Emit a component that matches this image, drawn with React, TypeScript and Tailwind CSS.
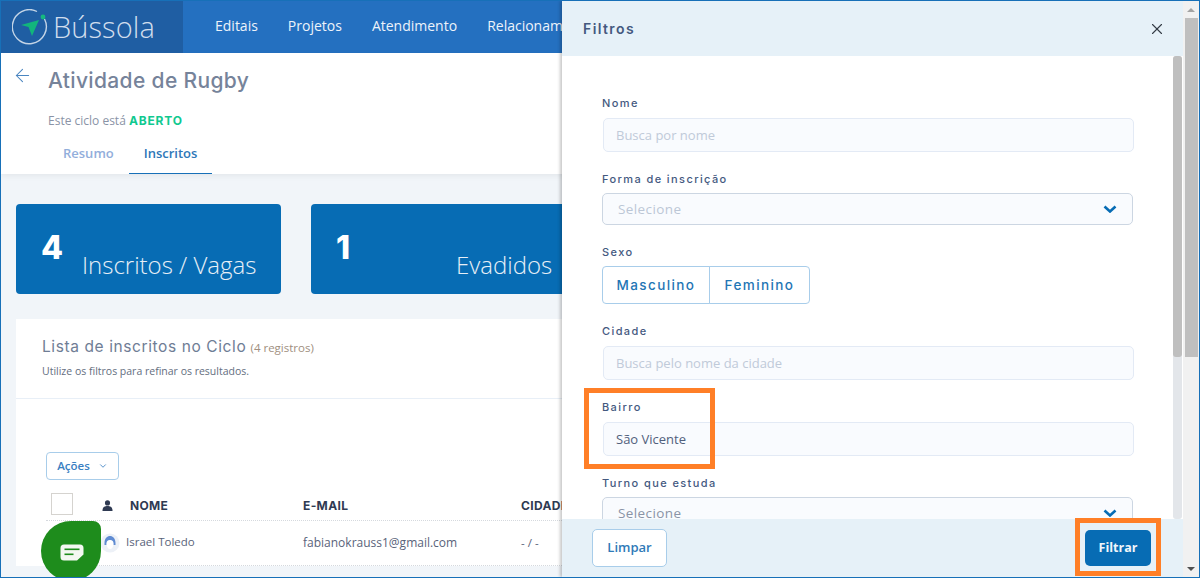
import { ArrowLeft, ChevronDown, X } from "lucide-react";

const navItems = ["Editais", "Projetos", "Atendimento", "Relacionamento"];

const labelClass = "font-['Inter',sans-serif] text-[11px] leading-[14px] font-medium tracking-[1.4px] text-[#44597f]";

function BussolaLogo() {
  return (
    <svg width="36" height="36" viewBox="0 0 36 36" fill="none">
      <path d="M32.5 10 A17 17 0 1 1 25 2.5" stroke="#c3d4e6" strokeWidth="1.4" />
      <circle cx="31" cy="8" r="2.4" fill="#16b97f" />
      <path d="M9 16 L27 11 L20 27 L16.5 18 Z" fill="#12b57c" />
    </svg>
  );
}

function Field({ label, value, placeholder }: { label: string; value?: string; placeholder?: string }) {
  return (
    <div>
      <div className={labelClass}>{label}</div>
      <div className="ml-px mt-[8px] h-[34px] w-[531px] rounded-[5px] border border-[#e3eaf5] bg-[#f9fbfe] pl-[12px] text-[13px] leading-[32px]">
        {value ? <span className="text-[#51607c]">{value}</span> : <span className="text-[#c0cad9]">{placeholder}</span>}
      </div>
    </div>
  );
}

function SelectField({ label, muted }: { label: string; muted?: boolean }) {
  return (
    <div>
      <div className={labelClass}>{label}</div>
      <div className="mt-[7px] flex h-[32px] w-[531px] items-center justify-between rounded-[5px] border border-[#ccd6e2] bg-[#f9fbfe] pl-[15px] pr-[15px]">
        <span className={muted ? "text-[13.5px] tracking-[0.4px] text-[#bcc7d6]" : "text-[13.5px] tracking-[0.4px] text-[#8a94a6]"}>Selecione</span>
        <svg width="14" height="8" viewBox="0 0 14 8" fill="none">
          <path d="M1.5 1.5 L7 6.5 L12.5 1.5" stroke="#076cb4" strokeWidth="2.6" />
        </svg>
      </div>
    </div>
  );
}

export default function App() {
  return (
    <div className="relative h-[578px] w-[1200px] overflow-hidden border border-[#1770b8] bg-[#f1f5f9] font-['Open_Sans',sans-serif]">
      {/* Page behind the drawer */}
      <header className="flex h-[52px] items-center bg-[#2470c0]">
        <div className="flex h-full w-[182px] items-center gap-[5px] bg-[#1f5ea3] pl-[11px]">
          <BussolaLogo />
          <span className="pb-[2px] text-[29px] font-light leading-none tracking-[0.1px] text-[#d0dded]">Bússola</span>
        </div>
        <nav className="flex gap-[30px] pb-[4px] pl-[32px] text-[14px] text-[#edf3fa]">
          {navItems.map((item) => (
            <span key={item} className="whitespace-nowrap">{item}</span>
          ))}
        </nav>
      </header>

      <section className="h-[121px] bg-white shadow-[0_2px_6px_rgba(0,0,0,0.06)]">
        <div className="flex pl-[11px] pt-[12px]">
          <ArrowLeft className="h-[21px] w-[21px] text-[#4a85c0]" strokeWidth={1.2} />
          <h1 className="ml-[15px] mt-[3px] font-['Inter',sans-serif] text-[21px] font-medium leading-[26px] tracking-[0.35px] text-[#76839a]">
            Atividade de Rugby
          </h1>
        </div>
        <p className="pl-[47px] pt-[19px] text-[12px] leading-[16px] text-[#8a93a6]">
          Este ciclo está <span className="font-['Inter',sans-serif] font-bold tracking-[0.8px] text-[#10c98f]">ABERTO</span>
        </p>
        <div className="mt-[6px] flex pl-[47px]">
          <span className="px-[15px] pb-[11px] pt-[9px] text-[13px] font-semibold leading-[18px] text-[#92aedb]">Resumo</span>
          <span className="border-b border-[#1770b8] px-[15px] pb-[11px] pt-[9px] text-[13px] font-semibold leading-[18px] text-[#2e77b8]">Inscritos</span>
        </div>
      </section>

      <div className="flex gap-[30px] pl-[15px] pt-[30px]">
        <div className="relative h-[90px] w-[265px] rounded-[4px] bg-[#076cb4] text-white">
          <span className="absolute left-[25px] top-[24px] font-['Inter',sans-serif] text-[32px] font-extrabold leading-[40px]">4</span>
          <span className="absolute left-[66px] top-[45px] text-[24px] font-light leading-[32px] text-[#e6eff7]">Inscritos / Vagas</span>
        </div>
        <div className="relative h-[90px] w-[265px] rounded-[4px] bg-[#076cb4] text-white">
          <span className="absolute left-[25px] top-[24px] font-['Inter',sans-serif] text-[32px] font-extrabold leading-[40px]">1</span>
          <span className="absolute left-[145px] top-[45px] text-[24px] font-light leading-[32px] text-[#e6eff7]">Evadidos</span>
        </div>
      </div>

      <section className="ml-[15px] mt-[25px] bg-white">
        <div className="h-[80px] border-b border-[#e8eff7] pl-[26px] pt-[17px]">
          <div className="leading-[20px]">
            <span className="font-['Inter',sans-serif] text-[15.5px] tracking-[0.6px] text-[#6f7d95]">Lista de inscritos no Ciclo</span>{" "}
            <span className="text-[11.5px] text-[#a08f80]">(4 registros)</span>
          </div>
          <p className="mt-[5px] text-[10.5px] leading-[16px] text-[#646e80]">Utilize os filtros para refinar os resultados.</p>
        </div>
        <div className="pl-[30px] pt-[53px]">
          <div className="flex h-[28px] w-[73px] items-center justify-center gap-[8px] rounded-[4px] border border-[#a8cdea] text-[11.5px] font-semibold text-[#3a80c2]">
            Ações
            <ChevronDown className="h-[10px] w-[10px]" strokeWidth={2} />
          </div>
          <div className="mt-[12px] flex h-[29px] w-[540px] items-center border-b border-dotted border-[#d5d9de] text-[12px] font-bold text-[#2f3a52]">
            <div className="mb-[4px] ml-[5px] h-[22px] w-[22px] shrink-0 border border-[#d5d3cf]" />
            <svg className="mb-[2px] ml-[29px] h-[11px] w-[11px] shrink-0" viewBox="0 0 12 12" fill="#2f3a52">
              <circle cx="6" cy="3.2" r="2.8" />
              <path d="M0.5 12 C0.5 7.5 3 6.5 6 6.5 C9 6.5 11.5 7.5 11.5 12 Z" />
            </svg>
            <span className="ml-[17px] w-[173px] shrink-0 font-['Inter',sans-serif] tracking-[0.35px]">NOME</span>
            <span className="w-[218px] shrink-0 font-['Inter',sans-serif] tracking-[0.35px]">E-MAIL</span>
            <span className="font-['Inter',sans-serif] tracking-[0.35px]">CIDADE</span>
          </div>
          <div className="flex h-[45px] w-[540px] items-center border-b border-dotted border-[#d5d9de] text-[11.5px] text-[#59637a]">
            <svg className="ml-[54px] h-[20px] w-[20px] shrink-0" viewBox="0 0 20 20" fill="none">
              <circle cx="10" cy="10" r="9.5" fill="#edf1f7" />
              <path d="M4.5 10 C4.5 0.5 15.5 0.5 15.5 10 L15.5 12 L13.5 12 C13.5 5.5 6.5 5.5 6.5 12 L4.5 12 Z" fill="#5f8bd2" />
              <path d="M6.5 10 C6.5 6 13.5 6 13.5 10 C13.5 14 12 16 10 16 C8 16 6.5 14 6.5 10 Z" fill="#ffffff" />
            </svg>
            <span className="ml-[6px] w-[177px] shrink-0 pb-[2px]">Israel Toledo</span>
            <span className="w-[218px] shrink-0 text-[12px]">fabianokrauss1@gmail.com</span>
            <span>- / -</span>
          </div>
        </div>
      </section>

      {/* Chat bubble */}
      <div className="absolute left-[40px] top-[520px] flex h-[60px] w-[60px] items-center justify-center rounded-[50%_8px_50%_50%] bg-[#1e8c1c] pl-[2px] pt-[2px]">
        <svg width="24" height="17" viewBox="0 0 24 17">
          <path d="M4 0.5 H20 A3.5 3.5 0 0 1 23.5 4 V10.5 L17 16.5 H4 A3.5 3.5 0 0 1 0.5 13 V4 A3.5 3.5 0 0 1 4 0.5 Z" fill="#f4f8f2" />
          <rect x="4.5" y="4.5" width="15" height="1.6" fill="#1e8c1c" />
          <rect x="4.5" y="9.5" width="9" height="1.6" fill="#1e8c1c" />
        </svg>
      </div>

      {/* Filter drawer */}
      <aside className="absolute bottom-0 left-[561px] top-0 flex w-[621px] flex-col bg-white shadow-[-2px_0_3px_rgba(0,0,0,0.22)]">
        <div className="flex h-[55px] shrink-0 items-center justify-between bg-[#e6f1f8] pl-[21px] pr-[17px]">
          <span className="font-['Inter',sans-serif] text-[14px] font-semibold tracking-[1.4px] text-[#44597f]">Filtros</span>
          <X className="h-[18px] w-[18px] text-[#333b45]" strokeWidth={1.5} />
        </div>
        <div className="relative min-h-0 flex-1 overflow-hidden pl-[40px]">
          <div className="flex flex-col gap-[20px] pt-[40px]">
            <Field label="Nome" placeholder="Busca por nome" />
            <SelectField label="Forma de inscrição" muted />
            <div>
              <div className={labelClass}>Sexo</div>
              <div className="mt-[7px] flex font-['Inter',sans-serif] text-[13.5px] font-medium tracking-[1.4px] text-[#1f76b5]">
                <span className="flex h-[38px] w-[108px] items-center justify-center rounded-l-[4px] border border-[#a8cdea]">Masculino</span>
                <span className="-ml-px flex h-[38px] w-[101px] items-center justify-center rounded-r-[4px] border border-[#a8cdea]">Feminino</span>
              </div>
            </div>
            <Field label="Cidade" placeholder="Busca pelo nome da cidade" />
            <Field label="Bairro" value="São Vicente" />
            <SelectField label="Turno que estuda" />
          </div>
          {/* Inner scrollbar */}
          <div className="absolute right-[1px] top-0 h-full w-[9px] rounded-[3px] bg-[#e3e6ea]">
            <div className="h-[301px] rounded-[3px] bg-[#bfbfbf]" />
          </div>
        </div>
        <div className="flex h-[58px] shrink-0 items-center justify-between bg-[#e6f1f8] pl-[30px] pr-[32px]">
          <span className="flex h-[38px] w-[75px] items-center justify-center rounded-[5px] border border-[#a8cdea] bg-white text-[13px] font-semibold text-[#2f7ab8]">Limpar</span>
          <span className="flex h-[36px] w-[66px] items-center justify-center rounded-[5px] bg-[#076cb4] text-[12.5px] font-bold text-[#f0f6fb]">Filtrar</span>
        </div>
      </aside>

      {/* Orange highlights */}
      <div className="absolute left-[583px] top-[387px] h-[81px] w-[131px] border-[5px] border-[#ff7f27]" />
      <div className="absolute left-[1074px] top-[517px] h-[58px] w-[86px] border-[5px] border-[#ff7f27]" />

      {/* Window scrollbar */}
      <div className="absolute bottom-0 right-0 top-0 flex w-[16px] flex-col items-center bg-[#f1f1f1]">
        <div className="flex h-[17px] w-full items-center justify-center">
          <div className="h-0 w-0 border-x-[4px] border-b-[4px] border-x-transparent border-b-[#a3a3a3]" />
        </div>
        <div className="h-[339px] w-[13px] bg-[#bfbfbf]" />
        <div className="mt-auto flex h-[16px] w-full items-center justify-center">
          <div className="h-0 w-0 border-x-[4px] border-t-[4px] border-x-transparent border-t-[#505050]" />
        </div>
      </div>
    </div>
  );
}
